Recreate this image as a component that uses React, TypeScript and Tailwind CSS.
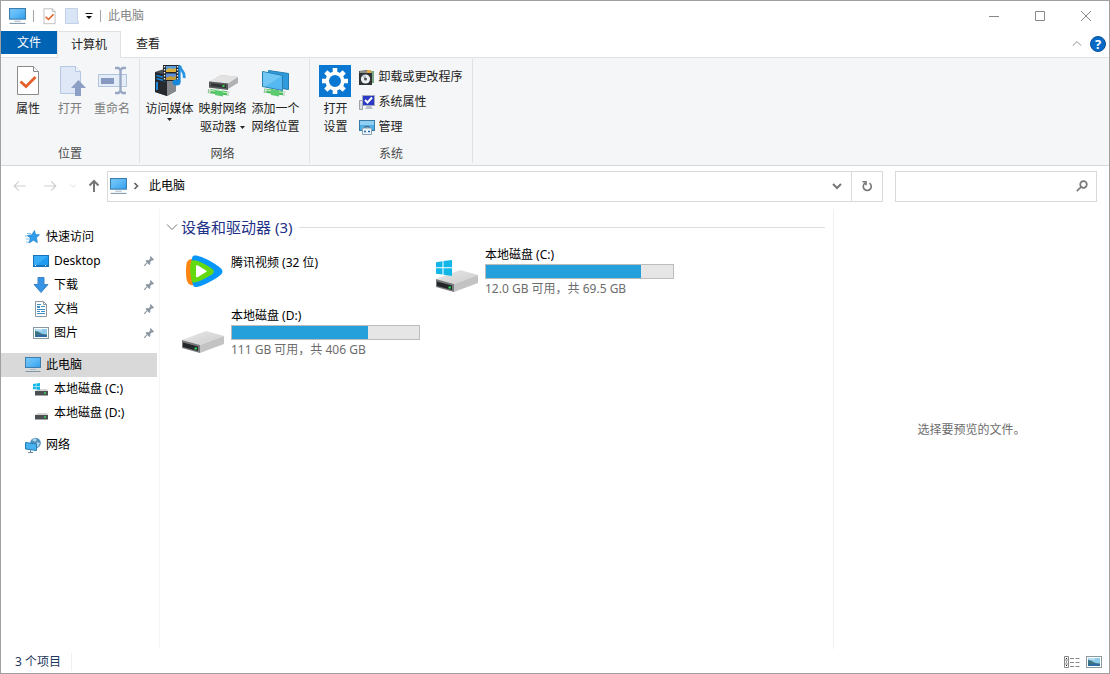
import type { ReactNode } from "react";

function Monitor({ className = "h-4 w-4" }: { className?: string }) {
  return (
    <svg viewBox="0 0 16 16" className={`${className} shrink-0`} aria-hidden="true">
      <defs>
        <linearGradient id="screen" x1="0" y1="0" x2="1" y2="1">
          <stop offset="0" stopColor="#7cc9fa" />
          <stop offset="0.5" stopColor="#5bb8f6" />
          <stop offset="1" stopColor="#2f9cec" />
        </linearGradient>
      </defs>
      <rect x="0.5" y="0.5" width="15" height="10" fill="url(#screen)" stroke="#3c7eae" />
      <path d="M5 12.4h6" stroke="#a8b9c6" strokeWidth="1" />
      <path d="M0.5 14.5h15" stroke="#7f98aa" strokeWidth="1" />
    </svg>
  );
}

function CheckPage({ className }: { className: string }) {
  return (
    <svg viewBox="0 0 32 32" className={className} aria-hidden="true">
      <path d="M5.5 1.5h16l5 5v23h-21z" fill="#fff" stroke="#8a8a8a" />
      <path d="M21.5 1.5v5h5" fill="#f4f4f4" stroke="#8a8a8a" />
      <path d="M8.500 16.500l5.500 5L23.500 12" fill="none" stroke="#e3602b" strokeWidth="2.800" />
    </svg>
  );
}

function OpenIcon() {
  return (
    <svg viewBox="0 0 32 32" className="h-8 w-8" aria-hidden="true">
      <path d="M6.500 1.500h15l5 5v22h-20z" fill="#dfe8f6" stroke="#b5c6e0" />
      <path d="M21.500 1.500v5h5" fill="#f2f6fc" stroke="#b5c6e0" />
      <path d="M24.500 15l7.500 8h-5v8h-6v-8h-4z" fill="#8d9fc4" />
    </svg>
  );
}

function RenameIcon() {
  return (
    <svg viewBox="0 0 32 32" className="h-8 w-8" aria-hidden="true">
      <rect x="2.500" y="9.500" width="28" height="12" fill="#e4ecf8" stroke="#b3c4de" />
      <rect x="5" y="13" width="13" height="6" fill="#8798c1" />
      <path d="M19 3h3.500l2 2 2-2H30M19 28h3.500l2-2 2 2H30M24.500 5v21" fill="none" stroke="#98a7c3" strokeWidth="2.400" />
    </svg>
  );
}

function MediaIcon() {
  return (
    <svg viewBox="0 0 32 32" className="h-8 w-8" aria-hidden="true">
      <path d="M1 7l9-3 12 3v19l-9 5-12-4z" fill="#4b4f54" />
      <path d="M13 11l9-3v18l-9 5z" fill="#85898d" />
      <path d="M1 7l12 3v21L1 27z" fill="#26292d" />
      <path d="M2.500 10.500l9 2.500M2.500 13.500l9 2.500" stroke="#1685d8" strokeWidth="1.500" />
      <path d="M3 17v8" stroke="#1d8ae0" strokeWidth="2" />
      <rect x="9" y="0" width="16" height="16" fill="#202428" />
      <path d="M12 1h10v6H12z" fill="#5b9ddc" />
      <path d="M12 5l3-2 4 1 3-1v4H12z" fill="#d9b13c" />
      <path d="M12 8.500h10V15H12z" fill="#5b8dd8" />
      <path d="M12 13l4-2 3 1 3-1v4H12z" fill="#c59b35" />
      <path d="M10.500 1v15M23.500 1v15" stroke="#f0f0f0" strokeWidth="1.400" strokeDasharray="1.500 1.500" />
      <path d="M25.500 0v17" stroke="#1689dc" strokeWidth="2.200" />
      <path d="M26 1c0 5 5.500 5 4 12" fill="none" stroke="#2895e4" strokeWidth="2.800" />
      <ellipse cx="22.500" cy="17.500" rx="4" ry="3" fill="#1689dc" />
    </svg>
  );
}

function MapDriveIcon() {
  return (
    <svg viewBox="0 0 32 32" className="h-8 w-8" aria-hidden="true">
      <path d="M2 17l12-7 17 2v6l-10 6-19-1z" fill="#b1b1b1" />
      <path d="M2 16.500L14 10l17 2-10 6.500z" fill="#e2e2e2" />
      <path d="M2 16.500l19 2V25L2 22.500z" fill="#55585a" />
      <path d="M4 18.500l15 1.500v3L4 21z" fill="#303335" />
      <path d="M15.500 21h2" stroke="#37d44b" strokeWidth="2" />
      <path d="M1 26l21 2.500" stroke="#48b957" strokeWidth="4" />
      <path d="M2 25.300l20 2.500" stroke="#b3edb5" strokeWidth="1.300" />
      <path d="M8 24l8 1.500v6L8 30z" fill="#58c96c" />
      <path d="M8 24.500l8 1.500" stroke="#d4f5d9" />
      <path d="M2.500 24v4M21 26v4" stroke="#d4dad6" strokeWidth="2" />
    </svg>
  );
}

function NetworkPlaceIcon() {
  return (
    <svg viewBox="0 0 32 32" className="h-8 w-8" aria-hidden="true">
      <path d="M8.500 5.500l20 3v16l-20-3z" fill="#2f9bdd" stroke="#247db0" />
      <path d="M2.500 6.500l20 4v15l-20-4z" fill="#55b8f1" stroke="#287fae" />
      <path d="M3 7l19 4L5 21.500 3 21z" fill="#7fcdf6" opacity=".7" />
      <path d="M4 25.500l21 3" stroke="#48b957" strokeWidth="4" />
      <path d="M5 25l20 2.800" stroke="#a9e8ae" strokeWidth="1.300" />
      <path d="M11 24l8 1.500v6L11 30z" fill="#5dca70" />
      <path d="M5.500 23.500v4M24 26v4" stroke="#d6ded9" strokeWidth="2" />
    </svg>
  );
}

function SettingsIcon() {
  return (
    <svg viewBox="0 0 32 32" className="h-8 w-8" aria-hidden="true">
      <rect width="32" height="32" fill="#0878d3" />
      <circle cx="16" cy="16" r="7.800" fill="none" stroke="#fff" strokeWidth="3.600" />
      <g stroke="#fff" strokeWidth="4.600">
        <path d="M16 3v4.500M16 24.500V29M3 16h4.500M24.500 16H29M6.800 6.800L10 10M22 22l3.200 3.200M25.200 6.800L22 10M10 22l-3.200 3.200" />
      </g>
    </svg>
  );
}

function ProgramsIcon() {
  return (
    <svg viewBox="0 0 16 16" className="h-4 w-4" aria-hidden="true">
      <path d="M0 2l9-1 3 1v11l-3 3H0z" fill="#5b5b52" />
      <path d="M1 2h8v2H1z" fill="#8b8d86" />
      <path d="M8 1h4v3H8z" fill="#e2a94a" />
      <path d="M12 2h3v12h-3z" fill="#7ba687" />
      <rect x="0" y="4" width="13" height="12" fill="#2f3335" />
      <circle cx="6.500" cy="10" r="4.600" fill="#eef1f3" />
      <path d="M6.500 10L3 7.500l3.500-2z" fill="#b6c2cb" />
      <circle cx="6.500" cy="10" r="1.500" fill="#4f5357" />
    </svg>
  );
}

function SystemIcon() {
  return (
    <svg viewBox="0 0 16 16" className="h-4 w-4" aria-hidden="true">
      <path d="M.5 6.500h3v9h-3z" fill="#dadde3" stroke="#9ba1a9" />
      <rect x="3.500" y="1.500" width="12" height="10" fill="#2b3bc4" stroke="#a3aac0" />
      <path d="M6 6l2.500 2.500L13 3.500" fill="none" stroke="#fff" strokeWidth="2" />
      <path d="M8 12h4l2 3H6z" fill="#b9bfcc" />
    </svg>
  );
}

function ManageIcon() {
  return (
    <svg viewBox="0 0 16 16" className="h-4 w-4" aria-hidden="true">
      <rect x=".5" y="1.500" width="15" height="10" fill="#4daee7" stroke="#397ba5" />
      <path d="M1 2h14v4H1z" fill="#90cef2" />
      <path d="M3.500 9h9v6.500h-9z" fill="#f0f4f7" stroke="#8ba3b4" />
      <path d="M6 9V7.500h4V9" fill="none" stroke="#4f6b80" />
      <path d="M5 12.500h2M9 12.500h2" stroke="#1b6cbb" strokeWidth="1.500" />
    </svg>
  );
}

function Logo({ size = 16 }: { size?: number }) {
  return (
    <path
      d="M0 2.200L6.500 1.200V7.300H0zM7.500 1L16 0V7.300H7.500zM0 8.300H6.500V14.600L0 13.800zM7.500 8.300H16V16L7.500 14.800z"
      fill="#12b7e8"
      transform={`scale(${size / 16})`}
    />
  );
}

function Disk({ windows = false }: { windows?: boolean }) {
  return (
    <svg viewBox="0 0 48 48" className="h-12 w-12" aria-hidden="true">
      <defs>
        <linearGradient id="diskTop" x1="0" y1="0" x2="1" y2="1">
          <stop offset="0" stopColor="#e7e7e7" />
          <stop offset="1" stopColor="#cdcdcd" />
        </linearGradient>
      </defs>
      <path d="M4 33l24-9 18 5-24 9z" fill="url(#diskTop)" />
      <path d="M22 38l24-9v8l-24 9z" fill="#c3c3c3" />
      <path d="M4 33l18 5v8L4 41z" fill="#77797b" />
      <path d="M5 35.500l15 4v4.500L5 40z" fill="#232628" />
      <path d="M16.500 41.500h2.500" stroke="#27db5d" strokeWidth="2" />
      {windows && (
        <g transform="translate(4 14)">
          <Logo size={16} />
        </g>
      )}
    </svg>
  );
}

function TencentIcon() {
  return (
    <svg viewBox="0 0 48 48" className="h-12 w-12" aria-hidden="true">
      <path d="M16 13c-6 0-8 1-8 12s2 15 8 14z" fill="#ff8412" />
      <path d="M15 10c5-3 25 9 28 12.500 2 2 2 4 0 6-4 4-23 15-27 12-3-2-4-27-1-30.500z" fill="#0797fb" />
      <path d="M14 14.500c4-2 18 6 21 9 1 1 1 3 0 4-3 3-17 10-20 9-3-1-4-20-1-22z" fill="#63d90f" />
      <path d="M18 20c0-1 1-1 2-.5l8 5c1 .5 1 1 0 1.500l-8 5c-1 .5-2 .5-2-.5z" fill="#fff" />
    </svg>
  );
}

function SmallDisk({ windows = false }: { windows?: boolean }) {
  return (
    <svg viewBox="0 0 16 16" className="h-4 w-4 shrink-0" aria-hidden="true">
      <path d="M2 10l3-2h9l1 2z" fill="#d4d4d4" />
      <rect x="2" y="10" width="13" height="4.500" fill="#4a4e50" />
      <path d="M11 12h2" stroke="#36d867" strokeWidth="1.500" />
      {windows && (
        <g transform="translate(0 2)">
          <Logo size={7} />
        </g>
      )}
    </svg>
  );
}

function StarIcon() {
  return (
    <svg viewBox="0 0 16 16" className="h-4 w-4 shrink-0" aria-hidden="true">
      <path d="M2 4.500h4M0 7h5M1 10h4M1 13h3" stroke="#7cc2f1" />
      <path d="M9.500 1.500L10.500 5.500l4 .2-3 3 .8 5-3.800-2.500L4 14l1.500-4.800L2.500 6.500l4.300-.8z" fill="#2d9ceb" stroke="#2684cf" strokeWidth=".7" />
    </svg>
  );
}

function DesktopIcon() {
  return (
    <svg viewBox="0 0 16 16" className="h-4 w-4 shrink-0" aria-hidden="true">
      <rect x=".5" y="2.500" width="15" height="11" fill="#1f9cf2" stroke="#1672ba" />
      <path d="M1 3h14L4 12H1z" fill="#38adf7" />
      <path d="M1 12.500h14" stroke="#1675bc" />
      <path d="M2 12.500h2M12 12.500h2" stroke="#fff" strokeDasharray="1 1" />
    </svg>
  );
}

function DownloadIcon() {
  return (
    <svg viewBox="0 0 16 16" className="h-4 w-4 shrink-0" aria-hidden="true">
      <path d="M5 .5h6v7h4L8 15.500 1 7.500h4z" fill="#3793e4" stroke="#3f85c6" />
    </svg>
  );
}

function DocumentIcon() {
  return (
    <svg viewBox="0 0 16 16" className="h-4 w-4 shrink-0" aria-hidden="true">
      <path d="M2.500.5h8l3 3v12h-11z" fill="#fff" stroke="#8b969e" />
      <path d="M10.500.5v3h3" fill="none" stroke="#8b969e" />
      <path d="M4 3.500h4M8 5.500h4M4 8.500h8M4 10.500h3M8 10.500h4M4 12.500h8" stroke="#3f8fc4" />
      <path d="M4 6h3" stroke="#3f8fc4" strokeWidth="2" />
    </svg>
  );
}

function PictureIcon() {
  return (
    <svg viewBox="0 0 16 16" className="h-4 w-4 shrink-0" aria-hidden="true">
      <rect x=".5" y="2.500" width="15" height="11" fill="#fff" stroke="#8a999f" />
      <path d="M2 4h12v8H2z" fill="#8fcbea" />
      <path d="M2 6c4 0 5 3.500 12 3.500V12H2z" fill="#3d7482" />
      <path d="M2 11c4-2 8-1 12-.5V12H2z" fill="#2f69a6" />
      <path d="M3 5h6" stroke="#e3f4fb" />
    </svg>
  );
}

function NetworkIcon() {
  return (
    <svg viewBox="0 0 16 16" className="h-4 w-4 shrink-0" aria-hidden="true">
      <circle cx="10.500" cy="6" r="5.300" fill="#4f8fbd" />
      <path d="M7 3l3-2 2 2-2 2zM12 5l3 1-2 4-2-1z" fill="#abd3e7" />
      <path d="M.5 5.500l11 1.500v6.500l-11-1.500z" fill="#48b2f1" stroke="#277db5" />
      <path d="M5.500 13v2M3 15.500h5" stroke="#6b8ca6" />
    </svg>
  );
}

function Pin() {
  return (
    <svg viewBox="0 0 12 12" className="h-3 w-3 shrink-0" aria-hidden="true">
      <path d="M7.500 1L11 4.500l-1 1-1-.3-1.800 1.800.2 2-1 1L2.500 6l1-1 2.200.2L7.300 3.500 6.800 2z" fill="#8b98a3" />
      <path d="M4.300 7.700L1.200 10.800" stroke="#8b98a3" strokeWidth="1.200" />
    </svg>
  );
}

function Chevron({ d, className }: { d: string; className: string }) {
  return (
    <svg viewBox="0 0 12 12" className={className} fill="none" stroke="currentColor" aria-hidden="true">
      <path d={d} />
    </svg>
  );
}

function RibbonGroup({ label, className, children }: { label: string; className: string; children: ReactNode }) {
  return (
    <section aria-label={label} className={`flex shrink-0 flex-col border-r border-[#dfe1e3] pt-1.5 ${className}`}>
      <div className="flex h-20 items-start justify-center">{children}</div>
      <div className="flex flex-1 items-center justify-center pt-1 text-[#4a4a4a]">{label}</div>
    </section>
  );
}

function RibbonButton({ icon, width, disabled, children }: { icon: ReactNode; width: string; disabled?: boolean; children: ReactNode }) {
  return (
    <button disabled={disabled} className={`flex shrink-0 flex-col items-center whitespace-nowrap leading-[18px] ${width} ${disabled ? "text-[#7c7c7c]" : "text-[#222]"}`}>
      {icon}
      <span className="mt-[3px] flex flex-col items-center">{children}</span>
    </button>
  );
}

function DownMark() {
  return (
    <svg viewBox="0 0 5 3" className="h-[3px] w-[5px]" aria-hidden="true">
      <path d="M0 0h5L2.500 3z" fill="#222" />
    </svg>
  );
}

function NavRow({ icon, label, pinned, nested, selected }: { icon: ReactNode; label: string; pinned?: boolean; nested?: boolean; selected?: boolean }) {
  return (
    <li>
      <a href="#" className={`flex h-6 items-center pr-0.5 ${nested ? "gap-[5px] pl-8" : "gap-[5px] pl-6"} ${selected ? "bg-[#d9d9d9]" : ""}`}>
        {icon}
        <span className="flex-1 whitespace-nowrap">{label}</span>
        {pinned && <Pin />}
      </a>
    </li>
  );
}

function DriveTile({ name, detail, used, windows }: { name: string; detail: string; used: number; windows?: boolean }) {
  return (
    <a href="#" className="flex h-[61px] gap-[5px]">
      <Disk windows={windows} />
      <div className="w-[189px]">
        <div className="leading-[18px]">{name}</div>
        <div role="meter" aria-label={name} aria-valuenow={used} aria-valuemin={0} aria-valuemax={100} className="h-[15px] border border-[#bcbcbc] bg-[#e6e6e6]">
          <div className="h-full bg-[#26a0da]" style={{ width: `${used}%` }} />
        </div>
        <div className="whitespace-nowrap leading-[20px] text-[#6d6d6d]">{detail}</div>
      </div>
    </a>
  );
}

export default function App() {
  return (
    <div className="flex min-h-screen flex-col border border-[#a0a0a0] bg-white text-[12px] text-black [font-family:'Noto_Sans','Noto_Sans_CJK_SC',sans-serif]">
      <header className="flex h-[30px] items-center">
        <div className="flex flex-1 items-center pl-2">
          <Monitor className="h-[17px] w-[17px]" />
          <span className="mx-[7px] h-3 w-px bg-[#a5a5a5]" />
          <button aria-label="属性"><CheckPage className="h-[17px] w-[17px]" /></button>
          <button aria-label="新建文件夹" className="ml-[7px]">
            <svg viewBox="0 0 14 16" className="h-4 w-3.5" aria-hidden="true">
              <path d="M.5.5h12v11l1 4H.5z" fill="#d9e4f5" stroke="#c3d2e8" />
            </svg>
          </button>
          <button aria-label="自定义快速访问工具栏" className="ml-1.5">
            <svg viewBox="0 0 8 8" className="h-2 w-2" aria-hidden="true">
              <path d="M.5 1.500h7" stroke="#111" />
              <path d="M1 4h6L4 7z" fill="#111" />
            </svg>
          </button>
          <span className="mx-[7px] h-3 w-px bg-[#a5a5a5]" />
          <h1 className="text-[#858585]">此电脑</h1>
        </div>
        <div className="flex gap-[30px] pr-[15px] text-[#888]">
          <button aria-label="最小化"><svg viewBox="0 0 16 16" className="h-4 w-4" fill="none" stroke="currentColor" aria-hidden="true"><path d="M3 8.500h10" /></svg></button>
          <button aria-label="最大化"><svg viewBox="0 0 16 16" className="h-4 w-4" fill="none" stroke="currentColor" aria-hidden="true"><path d="M3.500 3.500h9v9h-9z" /></svg></button>
          <button aria-label="关闭"><svg viewBox="0 0 16 16" className="h-4 w-4" fill="none" stroke="currentColor" aria-hidden="true"><path d="M3 3l10 10M13 3L3 13" /></svg></button>
        </div>
      </header>

      <nav aria-label="功能区" className="flex h-[27px] border-b border-[#dfe1e3]">
        <button className="h-[23px] w-14 bg-[#0163b3] text-white">文件</button>
        <button className="-mb-px h-[27px] w-16 border border-b-0 border-[#dfe1e3] bg-[#f5f6f7] text-[#222]">计算机</button>
        <button className="h-[26px] w-[54px] text-[#222]">查看</button>
        <div className="flex flex-1 items-center justify-end gap-2 pr-[3px]">
          <button aria-label="折叠功能区" className="text-[#777]"><Chevron className="h-2.5 w-2.5" d="M1 8l5-5 5 5" /></button>
          <button aria-label="帮助" className="flex h-4 w-4 items-center justify-center rounded-full border border-[#07519a] bg-[#0869c7] text-[13px] font-bold leading-none text-white">?</button>
        </div>
      </nav>

      <div className="flex h-[108px] border-b border-[#d5d7d9] bg-[#f5f6f7] pb-0.5 pt-px">
        <RibbonGroup label="位置" className="w-[139px]">
          <RibbonButton width="w-[42px]" icon={<CheckPage className="h-8 w-8" />}>属性</RibbonButton>
          <RibbonButton width="w-[42px]" disabled icon={<OpenIcon />}>打开</RibbonButton>
          <RibbonButton width="w-[42px]" disabled icon={<RenameIcon />}>重命名</RibbonButton>
        </RibbonGroup>
        <RibbonGroup label="网络" className="w-[170px] pr-1">
          <RibbonButton width="w-[53px]" icon={<MediaIcon />}>访问媒体<DownMark /></RibbonButton>
          <RibbonButton width="w-[53px]" icon={<MapDriveIcon />}>
            映射网络
            <span className="flex items-center gap-1">驱动器<DownMark /></span>
          </RibbonButton>
          <RibbonButton width="w-[53px]" icon={<NetworkPlaceIcon />}>添加一个<span>网络位置</span></RibbonButton>
        </RibbonGroup>
        <RibbonGroup label="系统" className="w-[163px]">
          <RibbonButton width="w-8" icon={<SettingsIcon />}>打开<span>设置</span></RibbonButton>
          <div className="ml-2 -mt-px flex flex-col items-start text-[#222]">
            <button className="flex h-[25px] items-center gap-[3px]"><ProgramsIcon />卸载或更改程序</button>
            <button className="flex h-[25px] items-center gap-[3px]"><SystemIcon />系统属性</button>
            <button className="flex h-[25px] items-center gap-[3px]"><ManageIcon />管理</button>
          </div>
        </RibbonGroup>
      </div>

      <div className="flex h-[43px] items-center px-3 pb-[3px]">
        <div className="flex w-[94px] shrink-0 items-center">
          <button disabled aria-label="后退" className="text-[#cfcfcf]"><Chevron className="h-3.5 w-3.5" d="M1 6h10M5 2L1 6l4 4" /></button>
          <button disabled aria-label="前进" className="ml-4 text-[#cfcfcf]"><Chevron className="h-3.5 w-3.5" d="M1 6h10M7 2l4 4-4 4" /></button>
          <button disabled aria-label="最近浏览的位置" className="ml-3 text-[#cfcfcf]"><Chevron className="h-2 w-2" d="M2 4l4 4 4-4" /></button>
          <button aria-label="向上" className="ml-2.5 text-[#777]">
            <svg viewBox="0 0 14 14" className="h-3.5 w-3.5" fill="none" stroke="currentColor" strokeWidth="2" aria-hidden="true"><path d="M7 13V2M2.500 6.500L7 2l4.500 4.500" /></svg>
          </button>
        </div>
        <div className="flex h-[31px] flex-1 items-center border border-[#d9d9d9]">
          <Monitor className="ml-0.5 h-[17px] w-[17px]" />
          <svg viewBox="0 0 12 12" className="ml-[3px] h-3 w-3" fill="none" stroke="#666" strokeWidth="1.700" aria-hidden="true"><path d="M4.500 3l3 3-3 3" /></svg>
          <a href="#" className="ml-[7px] flex-1">此电脑</a>
          <button aria-label="以前的位置" className="mr-2">
            <svg viewBox="0 0 12 12" className="h-3 w-3" fill="none" stroke="#777" strokeWidth="2" aria-hidden="true"><path d="M2 4l4 4 4-4" /></svg>
          </button>
          <button aria-label="刷新" className="flex h-full w-[31px] items-center justify-center border-l border-[#d9d9d9]">
            <svg viewBox="0 0 12 12" className="h-3 w-3" fill="none" stroke="#777" strokeWidth="1.600" aria-hidden="true"><path d="M8.500 3.200A4 4 0 1 1 4 3.200M1.500 1.800H5v3.500" /></svg>
          </button>
        </div>
        <label className="ml-3 flex h-[31px] w-[202px] shrink-0 items-center border border-[#d9d9d9] pr-2">
          <input type="search" aria-label="搜索此电脑" className="min-w-0 flex-1 pl-2 outline-none" />
          <svg viewBox="0 0 12 12" className="h-3 w-3" fill="none" stroke="#777" strokeWidth="1.700" aria-hidden="true"><circle cx="7.500" cy="4.500" r="3.300" /><path d="M5 7L.8 11.200" /></svg>
        </label>
      </div>

      <div className="flex flex-1">
        <nav aria-label="导航窗格" className="w-[159px] shrink-0 border-r border-[#f5f5f5] pr-0.5 pt-4">
          <ul>
            <NavRow icon={<StarIcon />} label="快速访问" />
            <NavRow nested pinned icon={<DesktopIcon />} label="Desktop" />
            <NavRow nested pinned icon={<DownloadIcon />} label="下载" />
            <NavRow nested pinned icon={<DocumentIcon />} label="文档" />
            <NavRow nested pinned icon={<PictureIcon />} label="图片" />
          </ul>
          <ul className="mt-2">
            <NavRow selected icon={<Monitor />} label="此电脑" />
            <NavRow nested icon={<SmallDisk windows />} label="本地磁盘 (C:)" />
            <NavRow nested icon={<SmallDisk />} label="本地磁盘 (D:)" />
          </ul>
          <ul className="mt-2">
            <NavRow icon={<NetworkIcon />} label="网络" />
          </ul>
        </nav>

        <main className="min-w-0 flex-1 border-r border-[#f0f0f0] pl-1.5 pr-2 pt-[7px]">
          <h2 className="flex h-[22px] items-center text-[15px] text-[#1e3287]">
            <Chevron className="mr-[3px] h-3 w-3 text-[#777]" d="M1 3.500l5 5 5-5" />
            设备和驱动器 (3)
            <span className="ml-[7px] h-px flex-1 bg-[#dedede]" />
          </h2>
          <div className="grid grid-cols-[254px_254px] pl-3 pt-2">
            <a href="#" className="flex h-[61px] gap-[5px]">
              <TencentIcon />
              <span className="pt-2 leading-[18px]">腾讯视频 (32 位)</span>
            </a>
            <DriveTile windows name="本地磁盘 (C:)" detail="12.0 GB 可用，共 69.5 GB" used={83} />
            <DriveTile name="本地磁盘 (D:)" detail="111 GB 可用，共 406 GB" used={72.5} />
          </div>
        </main>

        <aside aria-label="预览窗格" className="flex w-[275px] shrink-0 items-center justify-center pt-0.5 text-[#6d6d6d]">
          选择要预览的文件。
        </aside>
      </div>

      <footer className="flex h-6 items-center pl-3.5 pr-[7px] pt-px text-[#1e3960]">
        <span className="border-r border-[#f0f0f0] pr-2.5">3 个项目</span>
        <div className="ml-auto flex items-center gap-1.5">
          <button aria-label="详细信息">
            <svg viewBox="0 0 16 14" className="h-3.5 w-4" fill="none" stroke="#888" aria-hidden="true">
              <path d="M.5 1.500h4v11h-4zM.5 5h4M.5 9h4M6 3.500h4M11.500 3.500h4M6 7.500h4M11.500 7.500h4M6 11.500h4M11.500 11.500h4" />
              <path d="M2 3.500h1M2 7h1M2 10.500h1" stroke="#222" />
            </svg>
          </button>
          <button aria-label="大图标"><PictureIcon /></button>
        </div>
      </footer>
    </div>
  );
}
